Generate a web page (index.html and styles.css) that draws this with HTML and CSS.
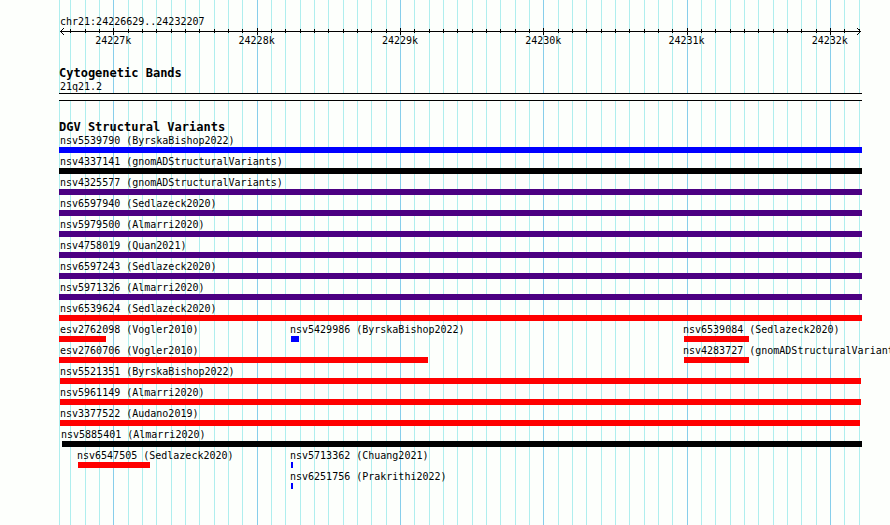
FILE: index.html
```html
<!DOCTYPE html>
<html lang="en">
<head>
<meta charset="utf-8">
<title>chr21:24226629..24232207</title>
<link rel="stylesheet" href="styles.css">
</head>
<body>
<main class="browser">
  <div class="gridlines" id="gridlines" aria-hidden="true"></div>
  <header class="scale">
    <div class="label region">chr21:24226629..24232207</div>
    <div class="ruler" id="ruler">
      <svg class="arrow" width="4" height="7" viewBox="0 0 4 7" aria-hidden="true"><path d="M3 0h1v1h-1zM2 1h1v1h-1zM1 2h1v1h-1zM0 3h4v1h-4zM1 4h1v1h-1zM2 5h1v1h-1zM3 6h1v1h-1z"/></svg>
      <div class="axis"></div>
      <svg class="arrow" width="4" height="7" viewBox="0 0 4 7" aria-hidden="true"><path d="M0 0h1v1h-1zM1 1h1v1h-1zM2 2h1v1h-1zM0 3h4v1h-4zM2 4h1v1h-1zM1 5h1v1h-1zM0 6h1v1h-1z"/></svg>
    </div>
    <div class="numbers" id="numbers"></div>
  </header>
  <section class="track">
    <h2>Cytogenetic Bands</h2>
    <div class="label region">21q21.2</div>
    <div class="band"></div>
  </section>
  <section class="track">
    <h2>DGV Structural Variants</h2>
    <div id="variants"></div>
  </section>
</main>
<script src="tracks.js"></script>
</body>
</html>
```
FILE: styles.css
```css
* {
  box-sizing: border-box;
}

body {
  margin: 0;
  background: #fdfffc;
  color: #000;
  font: 10px/13px "DejaVu Sans Mono", "Liberation Mono", monospace;
  overflow-x: hidden;
}

.browser {
  position: relative;
  display: flex;
  flex-direction: column;
  gap: 20px;
  min-height: 100vh;
  margin: 0 28px 0 59px;
  padding-top: 15px;
}

.gridlines {
  position: absolute;
  inset: 0;
  z-index: -1;
}

.line {
  position: absolute;
  top: 0;
  bottom: 0;
  border-left: 1px solid #afeeee;
}

.line.major {
  border-color: #87ceeb;
}

.label {
  height: 13px;
  white-space: nowrap;
}

.region {
  padding-left: 1px;
}

.ruler {
  position: relative;
  display: flex;
  align-items: center;
  height: 7px;
  padding: 0 1px;
}

.arrow {
  flex: none;
  shape-rendering: crispEdges;
}

.axis {
  flex: 1;
  height: 1px;
  background: #000;
}

.tick {
  position: absolute;
  top: 1px;
  height: 4px;
  border-left: 1px solid #000;
}

.tick.major {
  top: 0;
  height: 7px;
}

.numbers {
  position: relative;
  height: 12px;
  line-height: 11px;
}

.number {
  position: absolute;
  transform: translateX(-50%);
}

h2 {
  margin: 0;
  font-size: 12px;
  line-height: 13px;
  font-weight: bold;
}

.band {
  height: 8px;
  border: solid #000;
  border-width: 1px 0;
  background: #fdfffc;
}

.row {
  display: grid;
  grid-template-columns: 100%;
  height: 21px;
}

.variant {
  grid-area: 1 / 1;
}

.bar {
  height: 6px;
}

.gain {
  background: #00f;
}

.loss {
  background: #f00;
}

.complex {
  background: #4b0082;
}

.other {
  background: #000;
}
```
FILE: tracks.js
```js
// Positions are in plot units; the whole plot is SPAN units wide.
const SPAN = 803;
const pct = (units) => (units / SPAN * 100) + "%";

function add(parent, className, styles, text) {
  const el = document.createElement("div");
  el.className = className;
  Object.assign(el.style, styles);
  if (text) el.textContent = text;
  parent.append(el);
  return el;
}

const gridlines = document.getElementById("gridlines");
const ruler = document.getElementById("ruler");
const numbers = document.getElementById("numbers");
add(gridlines, "line", { left: pct(0) });
for (let i = 0; i < 56; i++) {
  const x = 11.35 + 14.33 * i;
  const kind = i % 10 === 3 ? " major" : "";
  add(gridlines, "line" + kind, { left: pct(x) });
  add(ruler, "tick" + kind, { left: pct(x) });
  if (kind) add(numbers, "number", { left: pct(x) }, (24227 + (i - 3) / 10) + "k");
}

// Each row holds [name, start, end, type] entries.
const rows = [
  [["nsv5539790 (ByrskaBishop2022)", 0, 803, "gain"]],
  [["nsv4337141 (gnomADStructuralVariants)", 0, 803, "other"]],
  [["nsv4325577 (gnomADStructuralVariants)", 0, 803, "complex"]],
  [["nsv6597940 (Sedlazeck2020)", 0, 803, "complex"]],
  [["nsv5979500 (Almarri2020)", 0, 803, "complex"]],
  [["nsv4758019 (Quan2021)", 0, 803, "complex"]],
  [["nsv6597243 (Sedlazeck2020)", 0, 803, "complex"]],
  [["nsv5971326 (Almarri2020)", 0, 803, "complex"]],
  [["nsv6539624 (Sedlazeck2020)", 0, 803, "loss"]],
  [["esv2762098 (Vogler2010)", 0, 47, "loss"],
   ["nsv5429986 (ByrskaBishop2022)", 232, 240, "gain"],
   ["nsv6539084 (Sedlazeck2020)", 625, 690, "loss"]],
  [["esv2760706 (Vogler2010)", 0, 369, "loss"],
   ["nsv4283727 (gnomADStructuralVariants)", 625, 690, "loss"]],
  [["nsv5521351 (ByrskaBishop2022)", 1, 802, "loss"]],
  [["nsv5961149 (Almarri2020)", 1, 802, "loss"]],
  [["nsv3377522 (Audano2019)", 1, 801, "loss"]],
  [["nsv5885401 (Almarri2020)", 3, 803, "other"]],
  [["nsv6547505 (Sedlazeck2020)", 19, 91, "loss"],
   ["nsv5713362 (Chuang2021)", 232, 234, "gain"]],
  [["nsv6251756 (Prakrithi2022)", 232, 234, "gain"]]
];

const variants = document.getElementById("variants");
for (const entries of rows) {
  const row = add(variants, "row", {});
  for (const [name, start, end, type] of entries) {
    const variant = add(row, "variant", {});
    add(variant, "label", { marginLeft: pct(Math.max(start - 1, 1)) }, name);
    add(variant, "bar " + type, { marginLeft: pct(start), width: pct(end - start) });
  }
}
```
